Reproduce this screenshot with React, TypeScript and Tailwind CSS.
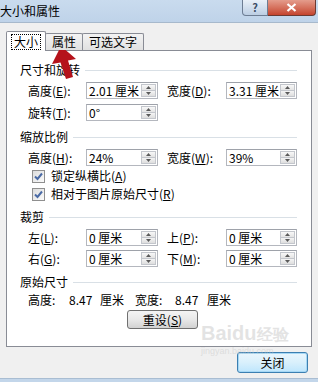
import React from "react";

function Key({ c }: { c: string }) {
  return (
    <>
      (<span className="underline underline-offset-[1px]">{c}</span>)
    </>
  );
}

function Spin() {
  return (
    <div className="flex flex-col w-[15px] my-[1px] mr-[1px] border border-[#c3c6cc]">
      <div className="flex-1 flex items-center justify-center bg-gradient-to-b from-[#f8f8f8] to-[#e4e4e4] border-b border-[#c3c6cc]">
        <svg width="5" height="3" viewBox="0 0 5 3">
          <path d="M0 3 L2.5 0 L5 3 Z" fill="#5a5a5a" />
        </svg>
      </div>
      <div className="flex-1 flex items-center justify-center bg-gradient-to-b from-[#f4f4f4] to-[#dedede]">
        <svg width="5" height="3" viewBox="0 0 5 3">
          <path d="M0 0 L5 0 L2.5 3 Z" fill="#5a5a5a" />
        </svg>
      </div>
    </div>
  );
}

function Field({ value, w }: { value: string; w: string }) {
  return (
    <div
      className={`flex h-[17px] ${w} bg-white border border-[#b4b7be] border-t-[#9ea2aa]`}
    >
      <div className="flex-1 overflow-hidden whitespace-nowrap pl-[2px] text-[12px] leading-[15px]">
        {value}
      </div>
      <Spin />
    </div>
  );
}

function Header({ title }: { title: string }) {
  return (
    <div className="flex items-center h-[16px] pl-[13px] pr-[14px]">
      <span className="text-[12px] leading-[16px]">{title}</span>
      <div className="flex-1 h-px bg-[#d9e0e6] ml-[5px]" />
    </div>
  );
}

function Row({
  l1,
  v1,
  l2,
  v2,
  mt,
}: {
  l1: React.ReactNode;
  v1: string;
  l2?: React.ReactNode;
  v2?: string;
  mt: string;
}) {
  return (
    <div className={`flex items-center pl-[21px] ${mt}`}>
      <div className="w-[58px] text-[12px] leading-[17px] whitespace-nowrap">{l1}</div>
      <Field value={v1} w="w-[72px]" />
      {l2 && (
        <>
          <div className="w-[9px]" />
          <div className="w-[59px] text-[12px] leading-[17px] whitespace-nowrap">{l2}</div>
          <Field value={v2 || ""} w="w-[71px]" />
        </>
      )}
    </div>
  );
}

function Check({ label, mt }: { label: React.ReactNode; mt: string }) {
  return (
    <div className={`flex items-center h-[16px] pl-[25px] ${mt}`}>
      <div className="w-[13px] h-[13px] border border-[#8f8f8f] bg-gradient-to-br from-[#dcdcdc] to-[#fbfbfb] flex items-center justify-center">
        <svg width="9" height="9" viewBox="0 0 9 9">
          <path d="M1 4.5 L3.5 7 L8 1.5" stroke="#4a6aa5" strokeWidth="2" fill="none" />
        </svg>
      </div>
      <span className="ml-[6px] text-[12px] leading-[16px]">{label}</span>
    </div>
  );
}

export default function App() {
  return (
    <div className="relative w-[318px] h-[382px] overflow-hidden flex flex-col bg-[#f0f0f0] text-black font-['Noto_Sans_CJK_SC','Liberation_Sans',sans-serif]">
      {/* title bar */}
      <div className="h-[23px] flex items-start justify-between bg-gradient-to-b from-[#c9dbee] to-[#bfd3e9] border-b border-[#a7b9cc]">
        <span className="text-[12px] leading-[17px] pt-[2px]">大小和属性</span>
        <div className="flex mr-[2px]">
          <div className="w-[26px] h-[16px] flex items-center justify-center rounded-bl-[4px] border border-t-0 border-[#6d7d93] bg-gradient-to-b from-[#e9f0f8] to-[#bccee3] text-[11px] leading-none text-[#3d4e66] font-bold">
            ?
          </div>
          <div className="w-[48px] h-[16px] flex items-center justify-center rounded-br-[4px] border border-t-0 border-l-0 border-[#6b3a32] bg-gradient-to-b from-[#e49c8c] to-[#c4432d]">
            <svg width="11" height="9" viewBox="0 0 11 9">
              <path d="M1.5 1 L9.5 8 M9.5 1 L1.5 8" stroke="#ffffff" strokeWidth="2.2" />
            </svg>
          </div>
        </div>
      </div>

      {/* body */}
      <div className="flex-1 flex flex-col px-[6px] pt-[8px]">
        <div className="relative z-10 flex items-end h-[20px] -mb-px">
          <div className="w-[40px] h-[20px] bg-white border border-b-0 border-[#898c95] rounded-t-[2px] flex justify-center pt-[2px]">
            <span className="border border-dotted border-black px-[2px] h-[16px] text-[12px] leading-[14px]">
              大小
            </span>
          </div>
          <div className="-ml-px w-[38px] h-[17px] mb-px border border-b-0 border-[#898c95] rounded-t-[2px] bg-gradient-to-b from-[#f3f3f3] to-[#e1e1e1] text-center text-[12px] leading-[15px]">
            属性
          </div>
          <div className="-ml-px w-[62px] h-[17px] mb-px border border-b-0 border-[#898c95] rounded-t-[2px] bg-gradient-to-b from-[#f3f3f3] to-[#e1e1e1] text-center text-[12px] leading-[15px]">
            可选文字
          </div>
        </div>

        <div className="h-[297px] border border-[#898c95] bg-white flex flex-col">
          <div className="mt-[11px]">
            <Header title="尺寸和旋转" />
          </div>
          <Row
            mt="mt-[4px]"
            l1={<>高度<Key c="E" />:</>}
            v1="2.01 厘米"
            l2={<>宽度<Key c="D" />:</>}
            v2="3.31 厘米"
          />
          <Row mt="mt-[5px]" l1={<>旋转<Key c="T" />:</>} v1="0°" />
          <div className="mt-[8px]">
            <Header title="缩放比例" />
          </div>
          <Row
            mt="mt-[4px]"
            l1={<>高度<Key c="H" />:</>}
            v1="24%"
            l2={<>宽度<Key c="W" />:</>}
            v2="39%"
          />
          <Check mt="mt-[2px]" label={<>锁定纵横比<Key c="A" /></>} />
          <Check mt="mt-[2px]" label={<>相对于图片原始尺寸<Key c="R" /></>} />
          <div className="mt-[7px]">
            <Header title="裁剪" />
          </div>
          <Row
            mt="mt-[4px]"
            l1={<>左<Key c="L" />:</>}
            v1="0 厘米"
            l2={<>上<Key c="P" />:</>}
            v2="0 厘米"
          />
          <Row
            mt="mt-[4px]"
            l1={<>右<Key c="G" />:</>}
            v1="0 厘米"
            l2={<>下<Key c="M" />:</>}
            v2="0 厘米"
          />
          <div className="mt-[7px]">
            <Header title="原始尺寸" />
          </div>
          <div className="mt-[3px] flex h-[14px] pl-[21px] text-[12px] leading-[14px] whitespace-nowrap">
            <span className="w-[41px]">高度:</span>
            <span className="w-[31px]">8.47</span>
            <span className="w-[35px]">厘米</span>
            <span className="w-[40px]">宽度:</span>
            <span className="w-[32px]">8.47</span>
            <span>厘米</span>
          </div>
          <div className="mt-[3px] ml-[120px] w-[71px] h-[19px] rounded-[3px] border border-[#707070] bg-gradient-to-b from-[#f4f4f4] via-[#e8e8e8] to-[#d2d2d2] text-center text-[12px] leading-[17px]">
            重设<Key c="S" />
          </div>
        </div>

        <div className="flex justify-end pr-[4px] mt-[5px]">
          <div className="w-[71px] h-[21px] rounded-[3px] border border-[#3c7fb1] bg-gradient-to-b from-[#eaf6fd] via-[#d9f0fc] to-[#bee6fd] shadow-[inset_0_0_0_1px_#a6d8f5] text-center text-[12px] leading-[19px]">
            关闭
          </div>
        </div>
      </div>
      <div className="h-[4px] bg-[#c3d6ea] border-t border-[#a9bdd2]" />

      {/* baidu watermark */}
      <div className="absolute left-[201px] top-[322px] pointer-events-none text-[#c8c8c8]/50">
        <div className="text-[20px] font-bold leading-[22px] font-['Liberation_Sans',sans-serif]">
          Baidu<span className="text-[16px]">经验</span>
        </div>
        <div className="text-[9px] leading-[11px] font-['Liberation_Sans',sans-serif]">
          jingyan.baidu.com
        </div>
      </div>

      {/* red arrow annotation */}
      <svg
        className="absolute left-0 top-0 pointer-events-none"
        width="318"
        height="382"
        viewBox="0 0 318 382"
      >
        <polygon
          points="61,46 76,59 68,60.5 73,77 66,79 60.5,62.5 52,64"
          fill="#b5121b"
        />
      </svg>
    </div>
  );
}
